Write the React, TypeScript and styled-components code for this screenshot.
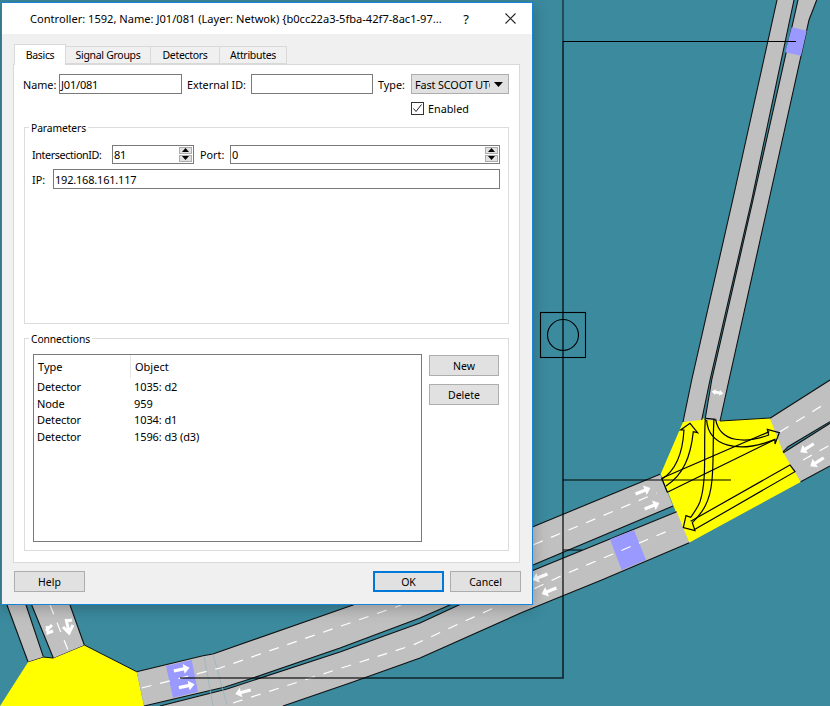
import React from 'react';
import styled, {createGlobalStyle} from 'styled-components';

const GlobalStyle = createGlobalStyle`
    html, body {
        margin: 0;
        padding: 0;
        background: #3b8a9e;
    }
    body {
        font-family: "Noto Sans", "Open Sans", sans-serif;
        font-size: 11px;
        color: #000;
    }
`;

const ROAD = '#c0c0c0';
const CASE = '#111';

const roadFills = [
    '777,0 794,0 751.7,200 710,380 701.7,420 683,422 691.7,380 732.7,200',
    '798,0 816.7,0 809,20 769,200 729,380 720,421 705,420 711.7,380 753,200',
    '770,418.3 830,380 830,421.7 788,446.7 783,452',
    '783.3,452.7 830,423.3 830,466 800.7,481.7',
    '660,474.3 533,526.7 353,605 213,654 203,655.7 136.7,671.7 144,706 225,687 253,678 340,648 420,618 456.7,602 533,565 673,506',
    '676.7,511.7 534,570 456.7,606 420,623 340,652 227,689 160,706 283,706 350,683 420,658 523,612 601.7,580 689.3,542.7',
    '7,605 28,661.7 43.3,656.7 26,605',
    '31.7,605 53.3,658 84.3,645 70,605',
];

const roadEdges = [
    '777,0 732.7,200 691.7,380 683,422',
    '794,0 751.7,200 710,380 701.7,420',
    '798,0 753,200 711.7,380 705,420',
    '816.7,0 809,20 769,200 729,380 720,421',
    '770,418.3 830,380',
    '783,452 788,446.7 830,421.7',
    '783.3,452.7 830,423.3',
    '800.7,481.7 830,466',
    '660,474.3 533,526.7 353,605 213,654 203,655.7 136.7,671.7',
    '673,506 533,565 456.7,602 420,618 340,648 253,678 225,687 144,706',
    '676.7,511.7 534,570 456.7,606 420,623 340,652 227,689 160,706',
    '283,706 350,683 420,658 523,612 601.7,580 689.3,542.7',
    '7,605 28,661.7',
    '26,605 43.3,656.7',
    '31.7,605 53.3,658',
    '70,605 84.3,645',
];

const centreLines = [
    '780,431.7 823,405',
    '803,460 830,445',
    '141.7,688 220,668 396.7,606.7 533,545 656.7,493',
    '233,703 413,645 500,605 563,575 670,530',
    '50,605 68,650',
];

const detectors = [
    '791.7,27.3 806.7,30.7 801,55.7 785.3,52.3',
    '610,539.3 634,530 646,560 621.7,570',
    '166,666 191.7,660 198,691.7 173,697.7',
];

const whiteArrows = [
    {x: 181.7, y: 669.3, angle: -12},
    {x: 186.7, y: 686, angle: -12},
    {x: 243, y: 692, angle: 165},
    {x: 540, y: 577, angle: 158},
    {x: 549, y: 591, angle: 158},
    {x: 643, y: 491, angle: -22},
    {x: 652, y: 506, angle: -22},
    {x: 807, y: 448, angle: 148},
    {x: 817, y: 462, angle: 148},
];

const DesktopMap = () => (
    <MapSvg viewBox='0 0 830 706'>
        <polygon
            points='0,706 28.3,661.7 43,657 53,658 84.3,645 136.7,671.7 144,706'
            fill='#ff0'
        />
        <polyline
            points='28.3,661.7 43,657 53,658 84.3,645 136.7,671.7'
            fill='none'
            stroke={CASE}
            strokeWidth='1'
        />
        <polygon
            points='660.7,474 683,422 700,418 720,421 770,418 788,454 800.7,482 689,542.7 676,512'
            fill='#ff0'
        />
        <polyline
            points='720,421 770,418'
            fill='none'
            stroke={CASE}
            strokeWidth='1'
        />
        {roadFills.map((points) => (
            <polygon
                key={points}
                points={points}
                fill={ROAD}
            />
        ))}
        {roadEdges.map((points) => (
            <polyline
                key={points}
                points={points}
                fill='none'
                stroke={CASE}
                strokeWidth='1.1'
            />
        ))}
        {detectors.map((points) => (
            <polygon
                key={points}
                points={points}
                fill='#9999ff'
            />
        ))}
        <path d='M204 656 L213 706 M213 654 L227 705' stroke='#8fb4bd' strokeWidth='0.7' fill='none'/>
        {centreLines.map((points) => (
            <polyline
                key={points}
                points={points}
                fill='none'
                stroke='#fff'
                strokeWidth='1.2'
                strokeDasharray='10 9'
            />
        ))}
        {whiteArrows.map((a) => (
            <path
                key={`${a.x}-${a.y}`}
                d='M-8 -1.6 L2 -1.6 L2 -5 L8 0 L2 5 L2 1.6 L-8 1.6 Z'
                fill='#fff'
                transform={`translate(${a.x} ${a.y}) rotate(${a.angle})`}
            />
        ))}
        <path
            d='M-6 0 L-2 -3 L-2 -1.4 L2 -1.4 L2 -3 L6 0 L2 3 L2 1.4 L-2 1.4 L-2 3 Z'
            fill='#fff'
            transform='translate(717.5 392.5) rotate(10)'
        />
        <path
            d='M46 631 L52 625 M47 626 L48 633 L53 631'
            stroke='#fff'
            strokeWidth='3'
            fill='none'
        />
        <path
            d='M66 619 L69 632 M63 627 L69 633 L73 625 M66 621 L72 620'
            stroke='#fff'
            strokeWidth='3'
            fill='none'
        />

        {/* turn movements, in 3x crop units around the junction */}
        <g
            transform='translate(530 380) scale(0.3333)'
            fill='none'
            stroke='#000'
            strokeWidth='3.6'
        >
            <path d='M395 298 C440 270 458 220 462 150 L452 150 L480 130 L503 158 L490 155 C482 230 460 285 408 318'/>
            <path d='M528 115 L557 118'/>
            <path d='M530 120 C535 195 620 225 735 178 L735 192 L748 158 L712 148 L716 165 C650 190 570 190 557 118'/>
            <path d='M526 118 C520 200 532 300 510 365 C502 385 492 398 482 412 L468 407 L460 443 L495 452 L487 428 C515 400 540 370 546 300 C552 240 548 170 552 118'/>
            <path d='M395 295 L718 155 M412 337 L732 180 M395 295 L412 337'/>
            <path d='M482 424 L780 255 L795 275 L495 448'/>
        </g>

        <path d='M563 0 V41' stroke='#000' strokeOpacity='0.55' strokeWidth='1.6'/>
        <path d='M563 41 V678 H180' stroke='#000' strokeOpacity='0.75' strokeWidth='1.6' fill='none'/>
        <path d='M563 41.5 H796 M563 480 H731 M563 550 H582' stroke='#000' strokeWidth='1.1'/>
        <rect x='540.5' y='312.5' width='45' height='45' fill='none' stroke='#000' strokeWidth='1.1'/>
        <circle cx='563' cy='335' r='15.5' fill='none' stroke='#000' strokeWidth='1.1'/>
    </MapSvg>
);

const SpinBox = ({value, width}: {value: string; width: number}) => (
    <SpinFrame $width={width}>
        <FieldText>{value}</FieldText>
        <SpinButtons>
            <SpinButton>
                <svg width='7' height='4' viewBox='0 0 7 4'><path d='M3.5 0 L7 4 H0 Z' fill='#000'/></svg>
            </SpinButton>
            <SpinButton>
                <svg width='7' height='4' viewBox='0 0 7 4'><path d='M0 0 H7 L3.5 4 Z' fill='#000'/></svg>
            </SpinButton>
        </SpinButtons>
    </SpinFrame>
);

const connections = [
    {type: 'Detector', object: '1035: d2'},
    {type: 'Node', object: '959'},
    {type: 'Detector', object: '1034: d1'},
    {type: 'Detector', object: '1596: d3 (d3)'},
];

const tabs = [
    {label: 'Basics', width: 52},
    {label: 'Signal Groups', width: 85},
    {label: 'Detectors', width: 69},
    {label: 'Attributes', width: 67},
];

export default function App() {
    return (
        <Desktop>
            <GlobalStyle/>
            <DesktopMap/>
            <Dialog>
                <TitleBar>
                    <TitleText>Controller: 1592, Name: J01/081 (Layer: Netwok) {'{'}b0cc22a3-5fba-42f7-8ac1-97...</TitleText>
                    <HelpGlyph>?</HelpGlyph>
                    <CloseGlyph width='11' height='11' viewBox='0 0 11 11'>
                        <path d='M0.5 0.5 L10.5 10.5 M10.5 0.5 L0.5 10.5' stroke='#222' strokeWidth='1.1'/>
                    </CloseGlyph>
                </TitleBar>
                <DialogBody>
                    <TabRow>
                        {tabs.map((tab, i) => (
                            <Tab key={tab.label} $width={tab.width} $active={i === 0}>{tab.label}</Tab>
                        ))}
                    </TabRow>
                    <TabPane>
                        <FormRow>
                            <FieldLabel $width={36}>Name:</FieldLabel>
                            <TextField $width={123}><FieldText>J01/081</FieldText></TextField>
                            <FieldLabel $width={64} $gap={5}>External ID:</FieldLabel>
                            <TextField $width={122}/>
                            <FieldLabel $width={33} $gap={5}>Type:</FieldLabel>
                            <ComboBox>
                                <ComboText>Fast SCOOT UTC</ComboText>
                                <svg width='9' height='5' viewBox='0 0 9 5'><path d='M0 0 H9 L4.5 5 Z' fill='#000'/></svg>
                            </ComboBox>
                        </FormRow>
                        <CheckRow>
                            <CheckBox>
                                <svg width='11' height='11' viewBox='0 0 11 11'>
                                    <path d='M1.5 5.5 L4 8.5 L9.5 1.5' stroke='#222' strokeWidth='1' fill='none'/>
                                </svg>
                            </CheckBox>
                            Enabled
                        </CheckRow>
                        <GroupBox $height={197} $top={12}>
                            <GroupTitle>Parameters</GroupTitle>
                            <ParamRow>
                                <FieldLabel $width={80} $tight={true}>IntersectionID:</FieldLabel>
                                <SpinBox value='81' width={82}/>
                                <FieldLabel $width={30} $gap={6}>Port:</FieldLabel>
                                <SpinBox value='0' width={270}/>
                            </ParamRow>
                            <ParamRow>
                                <FieldLabel $width={21}>IP:</FieldLabel>
                                <TextField $width={447}><FieldText>192.168.161.117</FieldText></TextField>
                            </ParamRow>
                        </GroupBox>
                        <GroupBox $height={213} $top={14}>
                            <GroupTitle>Connections</GroupTitle>
                            <ConnectionsArea>
                                <ListBox>
                                    <ListHeader>
                                        <HeaderCell $width={97}>Type</HeaderCell>
                                        <HeaderCell>Object</HeaderCell>
                                    </ListHeader>
                                    {connections.map((row) => (
                                        <ListRow key={row.object}>
                                            <ListCell $width={97}>{row.type}</ListCell>
                                            <ListCell>{row.object}</ListCell>
                                        </ListRow>
                                    ))}
                                </ListBox>
                                <SideButtons>
                                    <PushButton>New</PushButton>
                                    <PushButton>Delete</PushButton>
                                </SideButtons>
                            </ConnectionsArea>
                        </GroupBox>
                    </TabPane>
                    <Footer>
                        <PushButton $width={71}>Help</PushButton>
                        <FooterRight>
                            <PushButton $width={71} $primary={true}>OK</PushButton>
                            <PushButton $width={71}>Cancel</PushButton>
                        </FooterRight>
                    </Footer>
                </DialogBody>
            </Dialog>
        </Desktop>
    );
}

const Desktop = styled.div`
    position: relative;
    width: 830px;
    height: 706px;
    overflow: hidden;
    background: #3b8a9e;
`;

const MapSvg = styled.svg`
    position: absolute;
    left: 0;
    top: 0;
    width: 830px;
    height: 706px;
`;

const Dialog = styled.div`
    position: absolute;
    left: 1px;
    top: 2px;
    width: 532px;
    height: 603px;
    box-sizing: border-box;
    border: 1px solid #1883d7;
    box-shadow: 0 3px 14px rgba(0, 0, 0, 0.25);
    background: #f0f0f0;
    display: flex;
    flex-direction: column;
`;

const TitleBar = styled.div`
    height: 31px;
    background: #fff;
    display: flex;
    align-items: center;
    padding-left: 28px;
    flex-shrink: 0;
`;

const TitleText = styled.div`
    width: 427px;
    font-size: 11.1px;
    white-space: nowrap;
`;

const HelpGlyph = styled.div`
    width: 14px;
    margin-left: 2px;
    font-size: 13px;
    text-align: center;
`;

const CloseGlyph = styled.svg`
    margin-left: 32px;
`;

const DialogBody = styled.div`
    flex: 1;
    display: flex;
    flex-direction: column;
    padding: 10px 11px 0 11px;
`;

const TabRow = styled.div`
    display: flex;
    align-items: flex-end;
    height: 20px;
    margin-left: 1px;
    position: relative;
    z-index: 1;
`;

const Tab = styled.div<{$width: number; $active: boolean}>`
    box-sizing: border-box;
    width: ${({$width}) => $width}px;
    height: ${({$active}) => ($active ? 21 : 18)}px;
    margin-bottom: ${({$active}) => ($active ? -1 : 0)}px;
    border: 1px solid #d9d9d9;
    border-left-width: ${({$active}) => ($active ? 1 : 0)}px;
    border-bottom: ${({$active}) => ($active ? 'none' : '1px solid #d9d9d9')};
    background: ${({$active}) => ($active ? '#fff' : '#f0f0f0')};
    display: flex;
    align-items: center;
    justify-content: center;
    font-size: 10.5px;
    letter-spacing: -0.3px;
    line-height: 16px;
`;

const TabPane = styled.div`
    box-sizing: border-box;
    width: 507px;
    height: 499px;
    background: #fff;
    border: 1px solid #d9d9d9;
    padding: 9px 0 0 9px;
`;

const FormRow = styled.div`
    display: flex;
    align-items: center;
    height: 20px;
`;

const FieldLabel = styled.div<{$width: number; $gap?: number; $tight?: boolean}>`
    width: ${({$width}) => $width}px;
    margin-left: ${({$gap}) => $gap || 0}px;
    flex-shrink: 0;
    font-size: 10.8px;
    letter-spacing: ${({$tight}) => ($tight ? '-0.4px' : '0')};
    white-space: nowrap;
`;

const TextField = styled.div<{$width: number}>`
    box-sizing: border-box;
    width: ${({$width}) => $width}px;
    height: 20px;
    border: 1px solid #7a7a7a;
    background: #fff;
    display: flex;
    align-items: center;
    flex-shrink: 0;
`;

const FieldText = styled.span`
    flex: 1;
    padding-left: 1px;
    font-size: 11px;
    letter-spacing: -0.2px;
`;

const ComboBox = styled.div`
    box-sizing: border-box;
    width: 98px;
    height: 20px;
    border: 1px solid #adadad;
    background: #e1e1e1;
    display: flex;
    align-items: center;
    padding: 0 5px 0 3px;
    gap: 4px;
`;

const ComboText = styled.span`
    width: 76px;
    overflow: hidden;
    white-space: nowrap;
    font-size: 10.8px;
    letter-spacing: -0.1px;
`;

const CheckRow = styled.div`
    display: flex;
    align-items: center;
    gap: 4px;
    height: 13px;
    margin: 8px 0 0 388px;
    font-size: 10.8px;
`;

const CheckBox = styled.div`
    box-sizing: border-box;
    width: 13px;
    height: 13px;
    border: 1px solid #333;
    background: #fff;
    display: flex;
    align-items: center;
    justify-content: center;
`;

const GroupBox = styled.div<{$height: number; $top: number}>`
    position: relative;
    box-sizing: border-box;
    width: 485px;
    height: ${({$height}) => $height}px;
    margin: ${({$top}) => $top}px 0 0 1px;
    border: 1px solid #dcdcdc;
`;

const GroupTitle = styled.div`
    position: absolute;
    left: 4px;
    top: -7px;
    padding: 0 2px;
    background: #fff;
    font-size: 10.3px;
    letter-spacing: -0.1px;
    line-height: 14px;
`;

const ParamRow = styled.div`
    display: flex;
    align-items: center;
    height: 20px;
    margin: 16px 0 -11px 7px;
    & + & {
        margin-top: 16px;
    }
`;

const SpinFrame = styled.div<{$width: number}>`
    box-sizing: border-box;
    width: ${({$width}) => $width}px;
    height: 19px;
    border: 1px solid #7a7a7a;
    background: #fff;
    display: flex;
    align-items: center;
    flex-shrink: 0;
`;

const SpinButtons = styled.div`
    width: 13px;
    height: 15px;
    margin-right: 1px;
    display: flex;
    flex-direction: column;
    gap: 1px;
`;

const SpinButton = styled.div`
    flex: 1;
    background: #e1e1e1;
    border: 1px solid #adadad;
    display: flex;
    align-items: center;
    justify-content: center;
`;

const ConnectionsArea = styled.div`
    display: flex;
    padding: 15px 0 0 8px;
    gap: 7px;
`;

const ListBox = styled.div`
    box-sizing: border-box;
    width: 389px;
    height: 188px;
    border: 1px solid #7a7a7a;
    background: #fff;
`;

const ListHeader = styled.div`
    display: flex;
    height: 23px;
`;

const HeaderCell = styled.div<{$width?: number}>`
    box-sizing: border-box;
    width: ${({$width}) => ($width ? `${$width}px` : 'auto')};
    padding-left: 4px;
    border-right: ${({$width}) => ($width ? '1px solid #e5e5e5' : 'none')};
    font-size: 11px;
    line-height: 24px;
`;

const ListRow = styled.div`
    display: flex;
    height: 16.7px;
    align-items: center;
`;

const ListCell = styled.div<{$width?: number}>`
    width: ${({$width}) => ($width ? `${$width}px` : 'auto')};
    padding-left: 3px;
    box-sizing: border-box;
    font-size: 11px;
    letter-spacing: -0.1px;
`;

const SideButtons = styled.div`
    width: 70px;
    display: flex;
    flex-direction: column;
    gap: 8px;
    padding-top: 1px;
`;

const PushButton = styled.div<{$width?: number; $primary?: boolean}>`
    box-sizing: border-box;
    width: ${({$width}) => ($width ? `${$width}px` : '100%')};
    height: 21px;
    border: ${({$primary}) => ($primary ? '2px solid #0078d7' : '1px solid #adadad')};
    background: #e1e1e1;
    display: flex;
    align-items: center;
    justify-content: center;
    font-size: 10.5px;
`;

const Footer = styled.div`
    display: flex;
    justify-content: space-between;
    width: 507px;
    margin: 8px 0 0 1px;
`;

const FooterRight = styled.div`
    display: flex;
    gap: 6px;
`;
